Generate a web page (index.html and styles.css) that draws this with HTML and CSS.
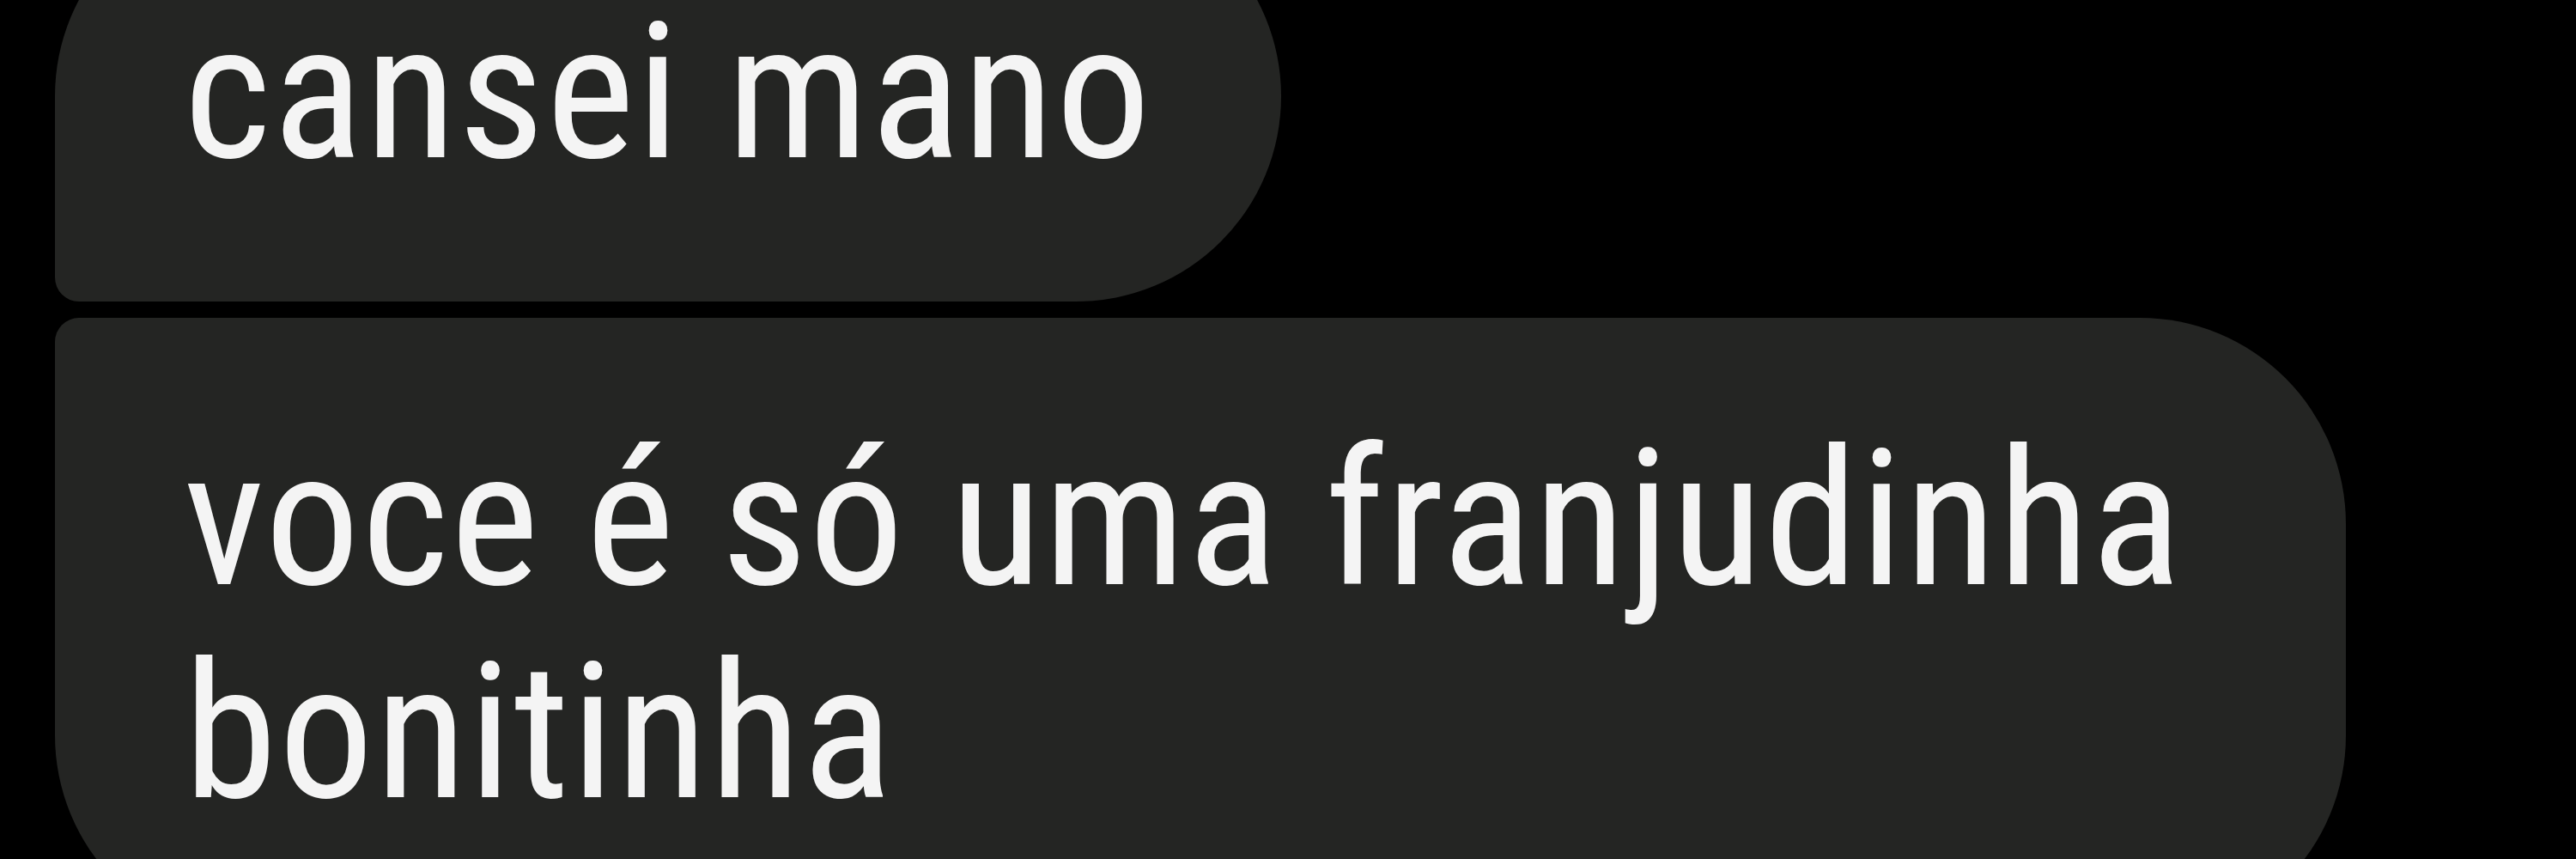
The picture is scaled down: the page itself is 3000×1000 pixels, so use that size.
FILE: index.html
```html
<!DOCTYPE html>
<html lang="pt-BR">
<head>
    <meta charset="UTF-8">
    <meta name="viewport" content="width=device-width, initial-scale=1.0">
    <title>Conversa</title>
    <link rel="stylesheet" href="styles.css">
</head>
<body>
    <div class="chat">
        <div class="msg msg-first">
            <p>cansei mano</p>
        </div>
        <div class="msg msg-last">
            <p>voce é só uma franjudinha bonitinha</p>
        </div>
    </div>
</body>
</html>
```

FILE: styles.css
```css
body {
    font-family: "Roboto Condensed", Roboto, "Liberation Sans", sans-serif;
    background-color: #000;
    margin: 0;
    overflow: hidden;
}
.chat {
    display: flex;
    flex-direction: column;
    align-items: flex-start;
    gap: 19px;
    padding-left: 64px;
    margin-top: -127px;
}
.msg {
    background: #242523;
    color: #f4f4f4;
    max-width: 2668px;
    box-sizing: border-box;
    padding: 111px 150px 119px;
    border-radius: 240px;
}
.msg p {
    margin: 0;
    font-size: 220px;
    letter-spacing: 2px;
    line-height: 248px;
}
/* grouped bubbles: the joining corners stay tight */
.msg-first {
    border-bottom-left-radius: 28px;
}
.msg-last {
    border-top-left-radius: 28px;
}
```
